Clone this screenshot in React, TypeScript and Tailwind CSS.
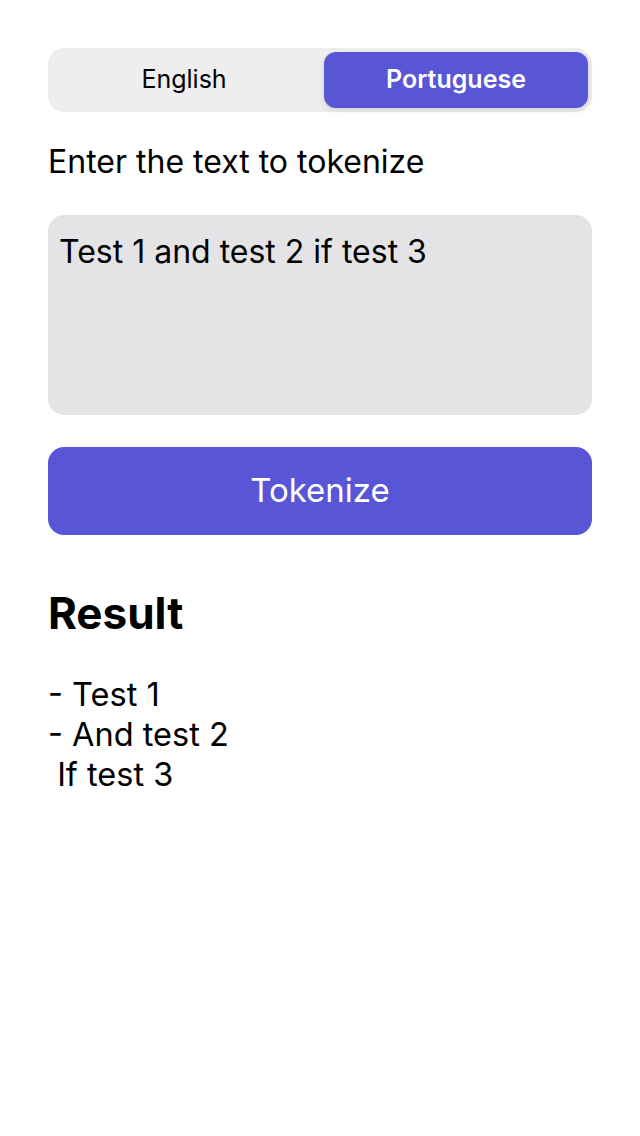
import { useState } from 'react'

export default function App() {
  const [lang, setLang] = useState<'en' | 'pt'>('pt')
  const [text, setText] = useState('Test 1 and test 2 if test 3')

  return (
    <div className="min-h-[1136px] bg-white px-12 pt-12 text-black" style={{ fontFamily: 'Inter, "Noto Sans", sans-serif' }}>
      {/* language picker */}
      <div className="grid h-16 grid-cols-2 gap-2 rounded-2xl bg-[#eeeeef] p-1">
        {[
          { value: 'en' as const, label: 'English' },
          { value: 'pt' as const, label: 'Portuguese' },
        ].map(opt => (
          <button
            key={opt.value}
            onClick={() => setLang(opt.value)}
            className={`rounded-xl text-[25px] ${lang === opt.value ? 'bg-[#5856d6] font-semibold text-white shadow-[0_2px_6px_rgba(0,0,0,0.12)]' : 'font-normal text-black'}`}
          >
            {opt.label}
          </button>
        ))}
      </div>

      <p className="mt-[30px] text-[32px] leading-[40px]">Enter the text to tokenize</p>

      <textarea
        value={text}
        onChange={e => setText(e.target.value)}
        className="mt-[33px] block h-[200px] w-full resize-none rounded-2xl bg-[#e4e4e6] px-[11px] py-[17px] text-[32px] leading-[40px] outline-none"
      />

      <button className="mt-8 flex h-[88px] w-full items-center justify-center rounded-2xl bg-[#5856d6] text-[33px] text-white">
        Tokenize
      </button>

      <h2 className="mt-[50px] text-[44px] font-bold leading-[56px]">Result</h2>

      <div className="mt-[34px] whitespace-pre text-[32.5px] leading-[40px]">
        {'- Test 1\n- And test 2\n If test 3'}
      </div>
    </div>
  )
}
